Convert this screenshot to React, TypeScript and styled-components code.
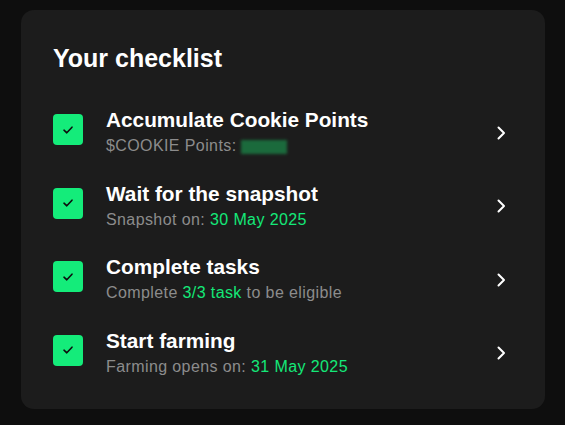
import styled, { createGlobalStyle } from "styled-components";

const GlobalStyle = createGlobalStyle`
  html, body {
    margin: 0;
    padding: 0;
    background: #0e0e0e;
    font-family: "Liberation Sans", Arial, sans-serif;
  }
`;

const Page = styled.div`
  width: 565px;
  height: 425px;
  padding: 10px 20px 16px 21px;
  box-sizing: border-box;
`;

const Card = styled.section`
  background: #1c1c1c;
  border-radius: 13px;
  height: 399px;
  padding: 30px 32px 0 32px;
  box-sizing: border-box;
`;

const Title = styled.h2`
  margin: 0 0 30px;
  font-size: 25px;
  line-height: 36px;
  font-weight: 700;
  color: #ffffff;
`;

const List = styled.div`
  display: flex;
  flex-direction: column;
  gap: 21.5px;
`;

const Row = styled.div`
  display: flex;
  align-items: flex-start;
  height: 52px;
`;

const Check = styled.div`
  width: 30px;
  height: 31px;
  margin-top: 8px;
  border-radius: 4px;
  background: #14ec7a;
  display: flex;
  align-items: center;
  justify-content: center;
  flex-shrink: 0;
  margin-right: 23px;
`;

const Texts = styled.div`
  flex: 1;
  display: flex;
  flex-direction: column;
`;

const RowTitle = styled.div`
  font-size: 20.8px;
  line-height: 28px;
  font-weight: 700;
  color: #ffffff;
`;

const Sub = styled.div`
  font-size: 16px;
  line-height: 24px;
  letter-spacing: 0.4px;
  color: #8c8c8c;
`;

const Hl = styled.span`
  color: #14e878;
`;

const Hidden = styled.span`
  display: inline-block;
  width: 46px;
  height: 14px;
  vertical-align: -3px;
  background: #1b6a3c;
  filter: blur(1.5px);
`;

const Chevron = styled.div`
  width: 16px;
  height: 52px;
  display: flex;
  align-items: center;
  justify-content: center;
  margin-right: 4px;
  padding-top: 1px;
  box-sizing: border-box;
`;

const CheckIcon = () => (
  <svg width="12" height="10" viewBox="0 0 12 10">
    <path d="M2 5.2 L4.8 7.8 L10 2.2" fill="none" stroke="#0d0d0d" strokeWidth="1.6" strokeLinecap="round" strokeLinejoin="round" />
  </svg>
);

const ChevronIcon = () => (
  <svg width="10" height="16" viewBox="0 0 10 16">
    <path d="M2.5 2.5 L8 8 L2.5 13.5" fill="none" stroke="#ffffff" strokeWidth="2" strokeLinecap="round" strokeLinejoin="round" />
  </svg>
);

const items = [
  { title: "Accumulate Cookie Points", sub: <>$COOKIE Points: <Hidden /></> },
  { title: "Wait for the snapshot", sub: <>Snapshot on: <Hl>30 May 2025</Hl></> },
  { title: "Complete tasks", sub: <>Complete <Hl>3/3 task</Hl> to be eligible</> },
  { title: "Start farming", sub: <>Farming opens on: <Hl>31 May 2025</Hl></> },
];

export default function App() {
  return (
    <>
      <GlobalStyle />
      <Page>
        <Card>
          <Title>Your checklist</Title>
          <List>
            {items.map((it) => (
              <Row key={it.title}>
                <Check>
                  <CheckIcon />
                </Check>
                <Texts>
                  <RowTitle>{it.title}</RowTitle>
                  <Sub>{it.sub}</Sub>
                </Texts>
                <Chevron>
                  <ChevronIcon />
                </Chevron>
              </Row>
            ))}
          </List>
        </Card>
      </Page>
    </>
  );
}
